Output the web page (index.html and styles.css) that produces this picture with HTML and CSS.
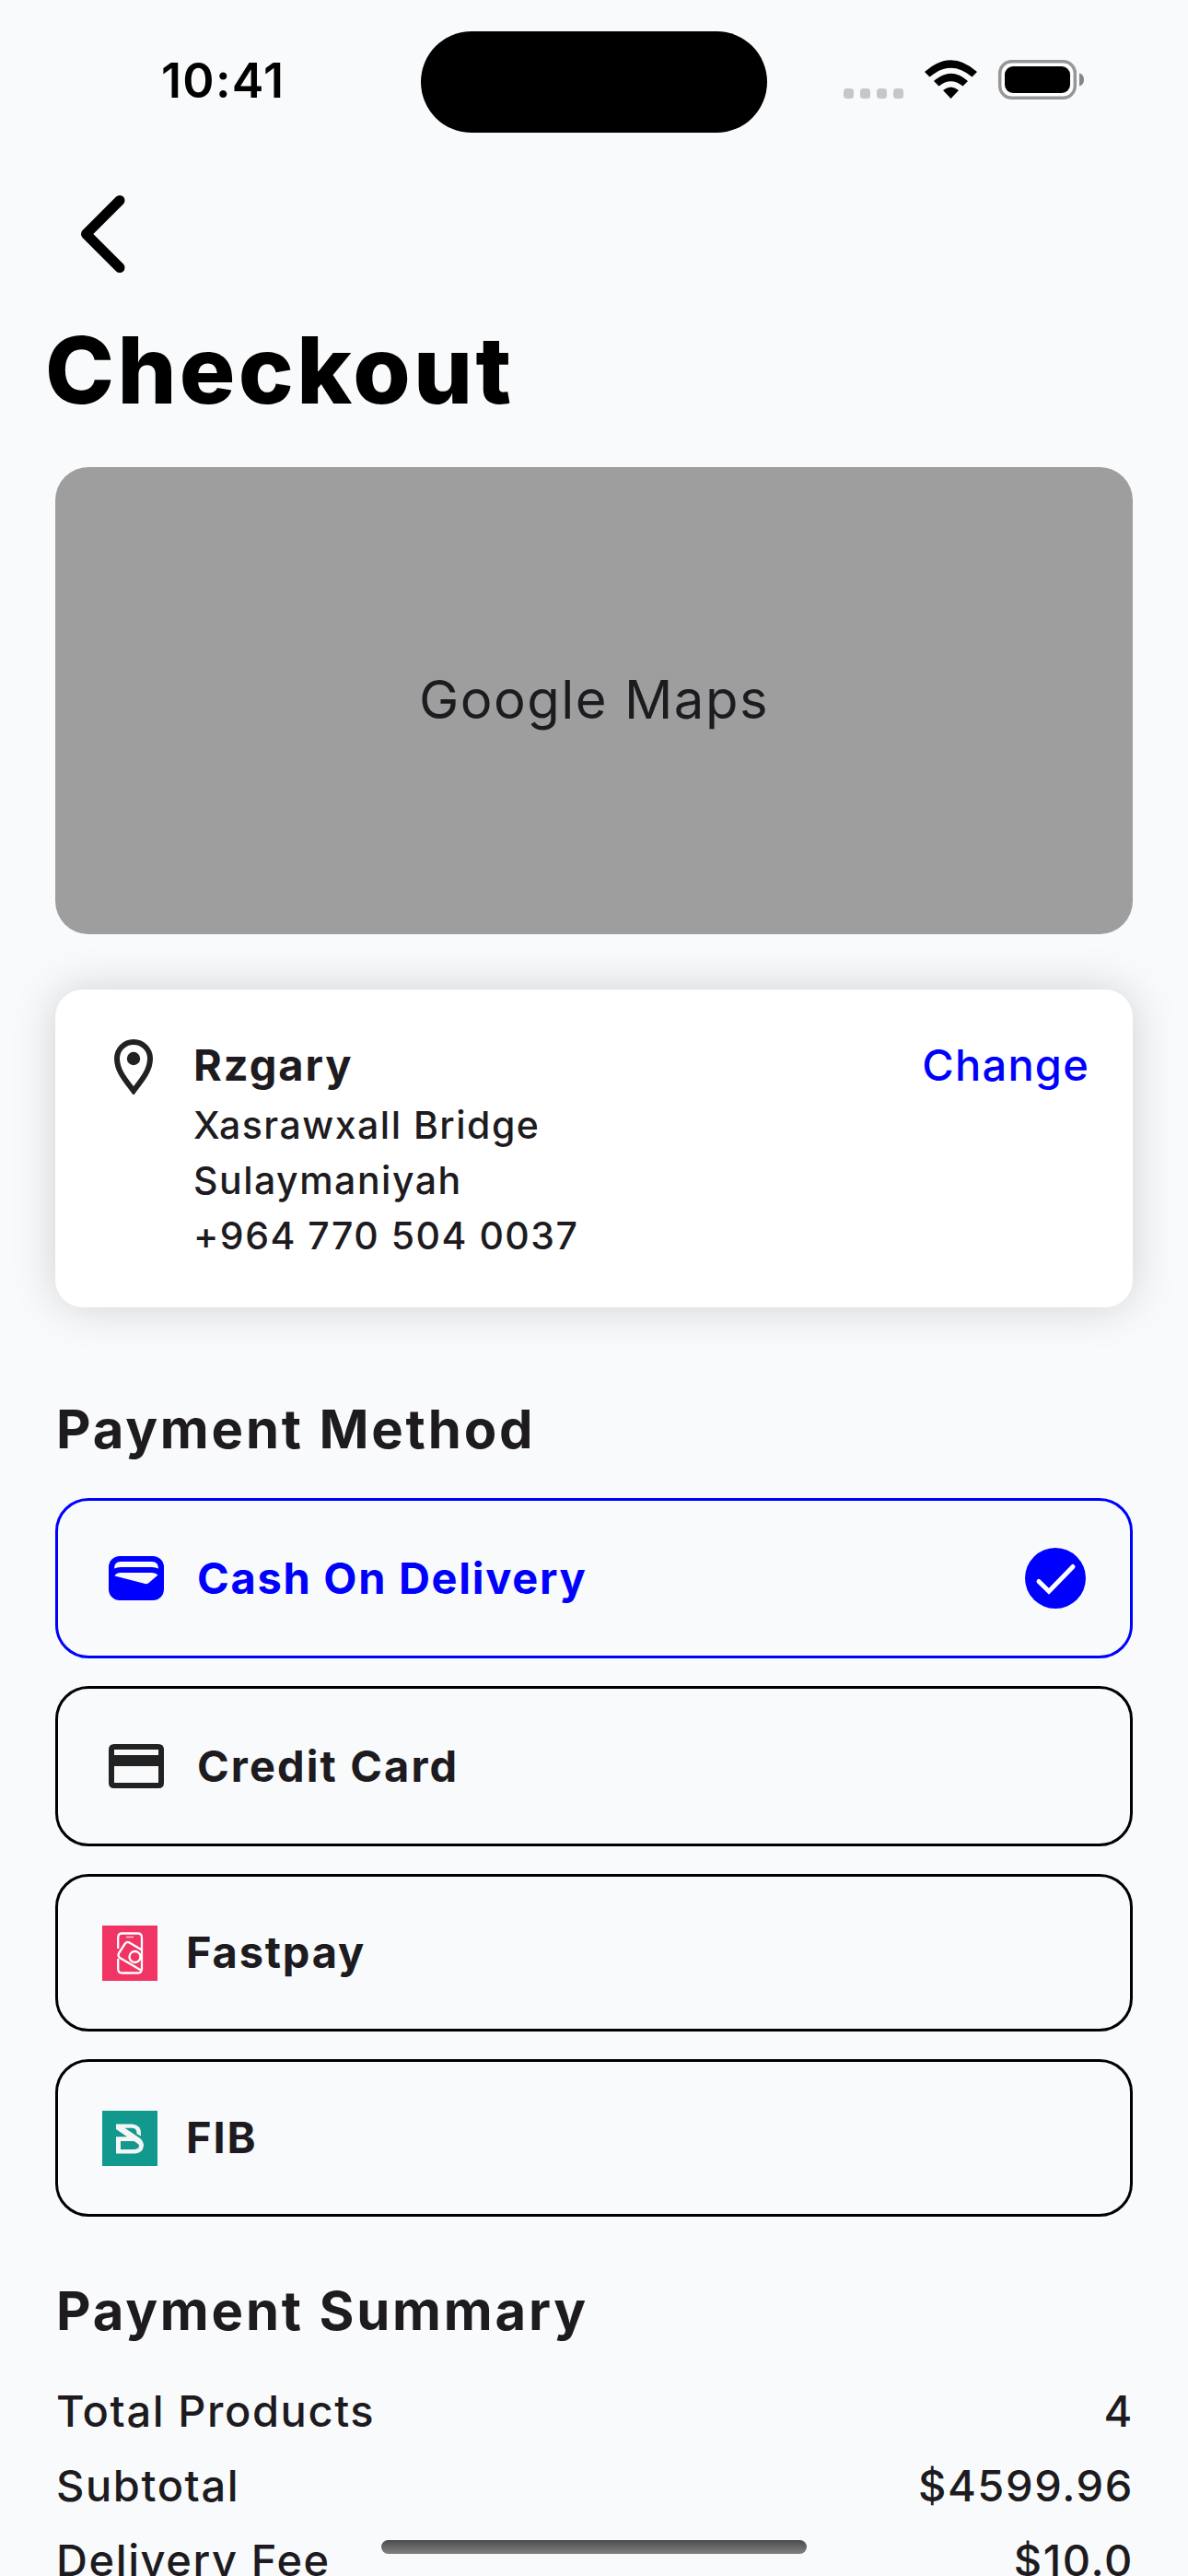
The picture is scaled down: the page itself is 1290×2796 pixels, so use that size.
FILE: index.html
```html
<!DOCTYPE html>
<html lang="en">
<head>
<meta charset="utf-8">
<title>Checkout</title>
<link rel="stylesheet" href="styles.css">
</head>
<body>
<div class="screen">
  <header class="status">
    <span class="time">10:41</span>
    <span class="island"></span>
    <svg class="status-icons" width="262" height="44" viewBox="0 0 262 44">
      <g fill="#c6c7c9"><rect y="31" width="11" height="11" rx="3.5"/><rect x="18" y="31" width="11" height="11" rx="3.5"/><rect x="36" y="31" width="11" height="11" rx="3.5"/><rect x="54" y="31" width="11" height="11" rx="3.5"/></g>
      <path d="M88 13Q116.500-12.500 145 13L139.500 18.500Q116.500-1 93.500 18.500Z M98 23Q116.500 6.500 135 23L129.500 28.500Q116.500 18 103.500 28.500Z M108 33Q116.500 26 125 33L116.500 42Z"/>
      <rect x="169.700" y="1.700" width="81.600" height="39.600" rx="13" fill="#fff" stroke="#979797" stroke-width="3.500"/>
      <rect x="175" y="7" width="71" height="29" rx="9"/>
      <path d="M256 14.500Q261 16 261 21.500T256 28.500Z" fill="#858585"/>
    </svg>
  </header>
  <nav class="nav">
    <svg width="48" height="84" viewBox="0 0 48 84"><path d="M42 5.500L5.500 42L42 78.500" fill="none" stroke="#000" stroke-width="11" stroke-linecap="round" stroke-linejoin="round"/></svg>
  </nav>
  <h1 class="title">Checkout</h1>
  <main class="content">
    <section class="map"><span class="map-label">Google Maps</span></section>
    <section class="address">
      <svg class="pin" width="42" height="60" viewBox="0 0 42 60"><path d="M21 3C11 3 3 11 3 21C3 34 12 44 21 56C30 44 39 34 39 21C39 11 31 3 21 3Z" fill="none" stroke="#222" stroke-width="6"/><circle cx="21" cy="21" r="7.200" fill="#222"/></svg>
      <div class="lines">
        <div class="name">Rzgary</div>
        <div class="line">Xasrawxall Bridge</div>
        <div class="line">Sulaymaniyah</div>
        <div class="line">+964 770 504 0037</div>
      </div>
      <a class="change">Change</a>
    </section>
    <h2 class="heading">Payment Method</h2>
    <div class="options">
      <div class="option selected">
        <svg width="60" height="48" viewBox="0 0 60 48"><rect width="60" height="48" rx="12" fill="#00f"/><path d="M6 13.500Q6 6 13 6H47Q54 6 54 13.500Q51 12 47 12H13Q9 12 6 13.500Z M6.500 21.500Q8 18 13 18H47Q51 18 53.500 20.500L43 29.500Q41.500 30.500 39.500 30Z" fill="#f8fafc"/></svg>
        <span class="label">Cash On Delivery</span>
        <svg class="check" width="66" height="66" viewBox="0 0 66 66"><circle cx="33" cy="33" r="33" fill="#00f"/><path d="M15 36.500L26 47.300L52 20.500" fill="none" stroke="#fff" stroke-width="5" stroke-linecap="round"/></svg>
      </div>
      <div class="option">
        <svg width="60" height="48" viewBox="0 0 60 48"><path fill-rule="evenodd" d="M6 0H54Q60 0 60 6V42Q60 48 54 48H6Q0 48 0 42V6Q0 0 6 0ZM6 6V12H54V6ZM6 24V42H54V24Z" fill="#222"/></svg>
        <span class="label">Credit Card</span>
      </div>
      <div class="option branded">
        <svg width="60" height="60" viewBox="0 0 60 60"><rect width="60" height="60" fill="#f03463"/><g fill="none" stroke="#fff" stroke-width="2.300"><path d="M17.200 25V13Q17.200 8.500 21.500 8.500H38.500Q43 8.500 43 13V47Q43 51.500 38.500 51.500H21.500Q17.200 51.500 17.200 47V36"/><path d="M43 26.500L29.500 18.500Q26.500 17 24.500 20L18 30Q16.500 33 19.500 35.200L43 49"/><circle cx="35.500" cy="34" r="6"/><path d="M26 12.500H34" stroke-width="1.500" opacity=".7"/></g></svg>
        <span class="label">Fastpay</span>
      </div>
      <div class="option branded">
        <svg width="60" height="60" viewBox="0 0 60 60"><rect width="60" height="60" fill="#12998e"/><path fill-rule="evenodd" fill="#f5f5f5" d="M15 14.500H32.500Q42 15.500 42 24.500V27.500L37.500 25Q38 19 32.500 18.700H24.500L40.500 29.500Q45 33 45 38Q44 46 35.500 46.500H15V28.300H27L15 20ZM20 33V42H35.500Q40.500 41 40 37.500Q39.500 36 37.500 35L34.500 33Z"/></svg>
        <span class="label">FIB</span>
      </div>
    </div>
    <h2 class="heading heading-summary">Payment Summary</h2>
    <dl class="summary">
      <div class="row"><dt>Total Products</dt><dd>4</dd></div>
      <div class="row"><dt>Subtotal</dt><dd>$4599.96</dd></div>
      <div class="row"><dt>Delivery Fee</dt><dd>$10.0</dd></div>
    </dl>
  </main>
  <div class="home-indicator"></div>
</div>
</body>
</html>
```
FILE: styles.css
```css
* { box-sizing: border-box; margin: 0; padding: 0; }
body { background: #f8fafc; color: #1d1b20; font-family: Inter, "Liberation Sans", sans-serif; }
svg { display: block; flex: none; }
.screen { position: relative; width: 1290px; height: 2796px; overflow: hidden; }

.status { display: grid; grid-template-columns: 457px 376px 1fr; height: 178px; color: #000; }
.time { padding: 57px 0 0 175px; font-size: 52px; line-height: 62px; font-weight: 600; letter-spacing: 1.300px; }
.island { margin-top: 34px; height: 110px; border-radius: 55px; background: #000; }
.status-icons { margin: 65px 0 0 83px; }

.nav { height: 166px; padding: 34px 0 0 88px; }
.title { height: 163px; padding-left: 49px; color: #000; font-size: 101px; line-height: 114px; font-weight: 800; letter-spacing: 3.300px; }
.content { padding: 0 60px; }

.map { display: flex; align-items: center; justify-content: center; height: 507px; padding-bottom: 3px; border-radius: 36px; background: #9e9e9e; }
.map-label { font-size: 58px; letter-spacing: 1.500px; }

.address { display: flex; align-items: flex-start; height: 345px; margin-top: 60px; padding: 49px 47px 0 64px; border-radius: 30px; background: #fff; box-shadow: 0 0 48px rgba(0, 0, 0, .17); }
.pin { margin-top: 5px; }
.lines { flex: 1; padding-left: 44px; }
.name { margin-bottom: 2px; font-size: 47px; line-height: 66px; font-weight: 700; letter-spacing: 1.900px; }
.line { font-size: 41px; line-height: 60px; font-weight: 450; letter-spacing: 1.500px; white-space: nowrap; }
.change { color: #00f; font-size: 47px; line-height: 66px; font-weight: 450; letter-spacing: 1.200px; }

.heading { padding-left: 1px; margin-top: 92px; font-size: 58px; line-height: 80px; font-weight: 700; letter-spacing: 2.800px; }
.options { display: grid; gap: 30px; margin-top: 35px; }
.option { display: flex; align-items: center; gap: 36px; height: 174px; padding: 0 48px 0 55px; border: 3px solid #000; border-radius: 36px; }
.branded { height: 171px; gap: 31px; padding-left: 48px; }
.selected { border-color: #00f; color: #00f; }
.label { font-size: 47px; line-height: 60px; font-weight: 650; letter-spacing: 2.100px; }
.selected .label { letter-spacing: 1.700px; }
.branded .label { padding-bottom: 2px; letter-spacing: 1.800px; }
.check { margin-left: auto; }

.heading-summary { margin-top: 62px; }
.summary { margin: 28px -1px 0 0; }
.row { display: flex; justify-content: space-between; font-size: 47px; line-height: 81px; font-weight: 450; letter-spacing: 1.600px; }
.row dt { padding-left: 1px; }

.home-indicator { position: absolute; left: 414px; top: 2757px; width: 462px; height: 15px; border-radius: 8px; background: linear-gradient(#4b4b4b, #828282); }
```
